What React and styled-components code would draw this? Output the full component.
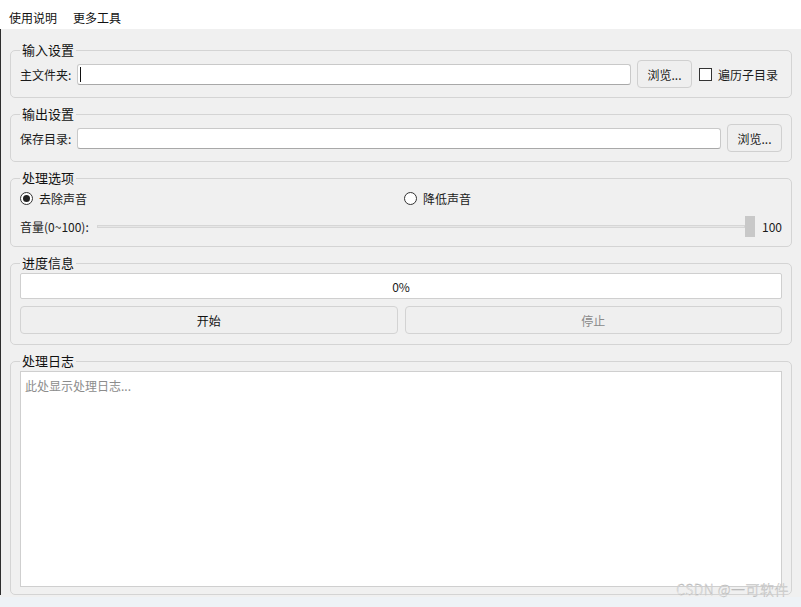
import React from 'react';
import styled, { createGlobalStyle } from 'styled-components';

const GlobalStyle = createGlobalStyle`
  html, body {
    margin: 0;
    padding: 0;
    background: #f0f0f0;
  }
  body {
    font-family: "Noto Sans CJK SC", "Microsoft YaHei", "Noto Sans", sans-serif;
    font-size: 12px;
    color: #1a1a1a;
  }
`;

const App = () => (
  <Window>
    <GlobalStyle />
    <MenuBar>
      <MenuItem>使用说明</MenuItem>
      <MenuItem>更多工具</MenuItem>
    </MenuBar>
    <Body>
      <Group>
        <Title>输入设置</Title>
        <Row>
          <Label>主文件夹:</Label>
          <Input>
            <Caret />
          </Input>
          <Button>浏览...</Button>
          <Check>
            <CheckBox />
            遍历子目录
          </Check>
        </Row>
      </Group>

      <Group>
        <Title>输出设置</Title>
        <Row>
          <Label>保存目录:</Label>
          <Input />
          <Button>浏览...</Button>
        </Row>
      </Group>

      <Group $bottom={9}>
        <Title>处理选项</Title>
        <RadioRow>
          <Radio>
            <RadioDot checked />
            去除声音
          </Radio>
          <Radio>
            <RadioDot />
            降低声音
          </Radio>
        </RadioRow>
        <SliderRow>
          <Label>音量(0~100):</Label>
          <Slider>
            <Groove />
            <Handle />
          </Slider>
          <Value>100</Value>
        </SliderRow>
      </Group>

      <Group $bottom={10}>
        <Title>进度信息</Title>
        <Progress>0%</Progress>
        <ButtonRow>
          <WideButton>开始</WideButton>
          <WideButton disabled>停止</WideButton>
        </ButtonRow>
      </Group>

      <Group $bottom={7}>
        <Title>处理日志</Title>
        <Log>此处显示处理日志...</Log>
      </Group>
    </Body>
    <Footer />
    <Watermark>CSDN @一可软件</Watermark>
  </Window>
);

export default App;

const Window = styled.div`
  position: relative;
  width: 801px;
  height: 607px;
  overflow: hidden;
  display: flex;
  flex-direction: column;
  background: #f0f0f0;
`;

const MenuBar = styled.div`
  height: 29px;
  background: #ffffff;
  display: flex;
  align-items: center;
  padding: 6px 0 0 9px;
  box-sizing: border-box;
  gap: 16px;
`;

const MenuItem = styled.span`
  font-size: 12px;
  color: #111;
`;

const Body = styled.div`
  display: flex;
  flex-direction: column;
  gap: 8px;
  padding: 13px 9px 0 9px;
  border-left: 1px solid #2e2e2e;
  box-sizing: border-box;
  width: 801px;
`;

const Group = styled.fieldset`
  margin: 0;
  border: 1px solid #d4d4d4;
  border-radius: 5px;
  padding: 2px 9px ${(p) => p.$bottom ?? 9}px 9px;
  min-width: 0;
`;

const Title = styled.legend`
  font-size: 13px;
  line-height: 16px;
  padding: 0 2px;
  margin-left: 0;
  color: #111;
`;

const Row = styled.div`
  display: flex;
  align-items: center;
  height: 28px;
`;

const Label = styled.span`
  font-size: 12px;
  white-space: nowrap;
  margin-right: 6px;
`;

const Input = styled.div`
  flex: 1;
  height: 21px;
  background: #fff;
  border: 1px solid #c9c9c9;
  border-bottom-color: #a8a8a8;
  border-radius: 3px;
  box-sizing: border-box;
  display: flex;
  align-items: center;
  padding-left: 2px;
`;

const Caret = styled.span`
  width: 1px;
  height: 15px;
  background: #111;
`;

const Button = styled.div`
  margin-left: 6px;
  width: 55px;
  height: 28px;
  box-sizing: border-box;
  border: 1px solid #d0d0d0;
  border-radius: 4px;
  background: #efefef;
  display: flex;
  align-items: center;
  justify-content: center;
  font-size: 12px;
`;

const Check = styled.label`
  display: flex;
  align-items: center;
  margin-left: 7px;
  margin-right: 4px;
  font-size: 12px;
  gap: 6px;
`;

const CheckBox = styled.span`
  width: 11px;
  height: 11px;
  border: 1px solid #333;
  background: #fff;
`;

const RadioRow = styled.div`
  display: grid;
  grid-template-columns: 384px 1fr;
  height: 20px;
  align-items: center;
`;

const Radio = styled.label`
  display: flex;
  align-items: center;
  gap: 6px;
  font-size: 12px;
`;

const RadioDot = styled.span`
  width: 11px;
  height: 11px;
  border-radius: 50%;
  border: 1px solid #333;
  background: #fff;
  display: flex;
  align-items: center;
  justify-content: center;
  &::after {
    content: '';
    display: ${(p) => (p.checked ? 'block' : 'none')};
    width: 7px;
    height: 7px;
    border-radius: 50%;
    background: #222;
  }
`;

const SliderRow = styled.div`
  display: flex;
  align-items: center;
  height: 22px;
  margin-top: 7px;
`;

const Slider = styled.div`
  flex: 1;
  display: flex;
  align-items: center;
  height: 22px;
  margin-left: 2px;
`;

const Groove = styled.div`
  flex: 1;
  height: 3px;
  background: #e6e6e6;
  border: 1px solid #d6d6d6;
  box-sizing: border-box;
`;

const Handle = styled.div`
  width: 10px;
  height: 21px;
  background: #c8c8c8;
`;

const Value = styled.span`
  margin-left: 7px;
  font-size: 12px;
`;

const Progress = styled.div`
  height: 26px;
  box-sizing: border-box;
  background: #fff;
  border: 1px solid #cfcfcf;
  border-radius: 2px;
  display: flex;
  align-items: center;
  justify-content: center;
  font-size: 12px;
`;

const ButtonRow = styled.div`
  display: grid;
  grid-template-columns: 1fr 1fr;
  gap: 7px;
  margin-top: 7px;
`;

const WideButton = styled.div`
  height: 28px;
  box-sizing: border-box;
  border: 1px solid #d3d3d3;
  border-radius: 4px;
  background: #efefef;
  display: flex;
  align-items: center;
  justify-content: center;
  font-size: 12px;
  color: ${(p) => (p.disabled ? '#8a8a8a' : '#111')};
`;

const Log = styled.div`
  height: 216px;
  box-sizing: border-box;
  background: #fff;
  border: 1px solid #cfcfcf;
  padding: 5px 4px;
  color: #8c8c8c;
  font-size: 12px;
`;

const Footer = styled.div`
  flex: 1;
  margin-top: 2px;
  background: #eef2f6;
`;

const Watermark = styled.div`
  position: absolute;
  right: 12px;
  bottom: 8px;
  font-size: 14px;
  font-weight: 300;
  color: #fafafa;
  -webkit-text-stroke: 0.35px #b0b0b0;
  letter-spacing: 0.5px;
`;
